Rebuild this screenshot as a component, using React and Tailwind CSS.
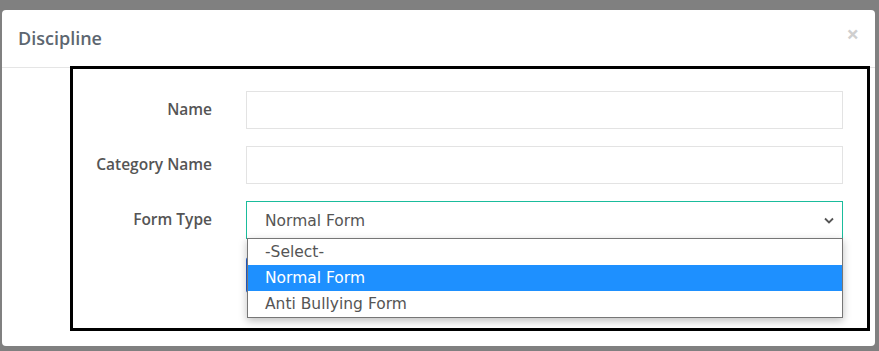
import React from "react";

const font = { fontFamily: "'Open Sans', 'DejaVu Sans', sans-serif" };
const wide = { fontFamily: "'DejaVu Sans', 'Open Sans', sans-serif" };

const Field = ({ label, children }) => (
  <div className="flex items-start">
    <label className="h-[38px] w-[139px] shrink-0 text-right text-[15.5px] font-semibold leading-[36px] text-[#555]">
      {label}
    </label>
    <div className="ml-[34px] flex-1">{children}</div>
  </div>
);

const App = () => {
  const options = ["-Select-", "Normal Form", "Anti Bullying Form"];

  return (
    <div className="h-[351px] w-[879px] overflow-hidden bg-[#808080] pt-[10px]" style={font}>
      {/* Modal */}
      <div className="ml-[2px] h-[336px] w-[873px] rounded-[4px] bg-white">
        {/* Header */}
        <div className="flex h-[58px] items-center justify-between border-b border-[#e5e5e5] pl-[16px] pr-[16px]">
          <h4 className="text-[18px] font-semibold text-[#5d6670]">Discipline</h4>
          <span className="-mt-[12px] text-[22px] font-bold leading-none text-[#cfcfcf]">×</span>
        </div>

        {/* Body */}
        <div className="-mt-[2px] ml-[68px] h-[265px] w-[800px] border-[3px] border-black pl-0 pr-[24px] pt-[22px]">
          <div className="flex flex-col gap-[17px]">
            <Field label="Name">
              <div className="h-[38px] border border-[#e3e3e3] bg-white" />
            </Field>
            <Field label="Category Name">
              <div className="h-[38px] border border-[#e3e3e3] bg-white" />
            </Field>
            <Field label="Form Type">
              <div className="relative" style={wide}>
                <div className="flex h-[38px] items-center justify-between border border-[#1abc9c] bg-white pl-[18px] pr-[8px] pt-[3px] text-[15.5px] text-[#555]">
                  <span>Normal Form</span>
                  <svg width="10" height="7" viewBox="0 0 10 7" fill="none" className="-mt-[3px]">
                    <path d="M1 1.5l4 4 4-4" stroke="#555" strokeWidth="1.8" />
                  </svg>
                </div>
                <button className="mt-[18px] h-[36px] w-[60px] rounded-[3px] bg-[#1f5fd6] text-white" />
                {/* open listbox */}
                <div className="absolute left-px right-0 top-[37px] border border-[#767676] bg-white shadow-[0_3px_8px_rgba(0,0,0,0.25)]">
                  {options.map((o) => (
                    <div
                      key={o}
                      className={
                        o === "Normal Form"
                          ? "h-[26px] bg-[#1e90ff] pl-[17px] text-[15.5px] leading-[26px] text-white"
                          : "h-[26px] pl-[17px] text-[15.5px] leading-[26px] text-[#555]"
                      }
                    >
                      {o}
                    </div>
                  ))}
                </div>
              </div>
            </Field>
          </div>
        </div>
      </div>
    </div>
  );
};

export default App;
